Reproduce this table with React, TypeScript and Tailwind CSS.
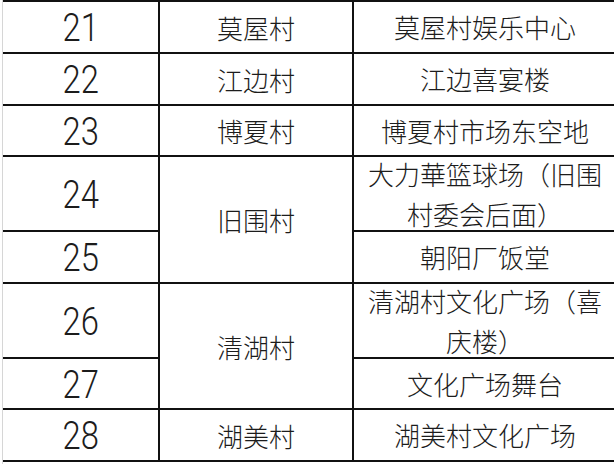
const rows: { no: string; village?: string; span?: number; place: string }[] = [
  { no: "21", village: "莫屋村", place: "莫屋村娱乐中心" },
  { no: "22", village: "江边村", place: "江边喜宴楼" },
  { no: "23", village: "博夏村", place: "博夏村市场东空地" },
  { no: "24", village: "旧围村", span: 2, place: "大力華篮球场（旧围村委会后面）" },
  { no: "25", place: "朝阳厂饭堂" },
  { no: "26", village: "清湖村", span: 2, place: "清湖村文化广场（喜庆楼）" },
  { no: "27", place: "文化广场舞台" },
  { no: "28", village: "湖美村", place: "湖美村文化广场" },
];

const cjk = "font-['Noto_Sans_CJK_SC','Noto_Sans',sans-serif] font-light";

export default function App() {
  return (
    <div className="h-[464px] w-[614px] overflow-hidden bg-white pl-[2px]">
      <div className="h-full border-l border-[#d6d6d6]">
        <div className="grid w-[613px] grid-cols-[155px_192px_262px] grid-rows-[50px_50px_49px_73px_50px_73px_49px_50px] gap-[2px] bg-[#111] py-[2px] text-[#1c1c1c]">
          {rows.map((r, i) => (
            <div key={r.no} className="contents">
              <div
                className="flex items-center justify-center bg-white pt-[3px]"
                style={{ gridRow: i + 1, gridColumn: 1 }}
              >
                <span className="inline-block scale-x-[0.84] font-['Roboto','Liberation_Sans',sans-serif] text-[39px] font-light leading-none">
                  {r.no}
                </span>
              </div>
              {r.village && (
                <div
                  className={`flex items-center justify-center bg-white text-[26px] ${cjk}`}
                  style={{ gridRow: `${i + 1} / span ${r.span ?? 1}`, gridColumn: 2 }}
                >
                  {r.village}
                </div>
              )}
              <div
                className={`flex items-center justify-center bg-white px-3 text-center text-[26px] leading-[40px] ${cjk}`}
                style={{ gridRow: i + 1, gridColumn: 3 }}
              >
                {r.place}
              </div>
            </div>
          ))}
        </div>
      </div>
    </div>
  );
}
